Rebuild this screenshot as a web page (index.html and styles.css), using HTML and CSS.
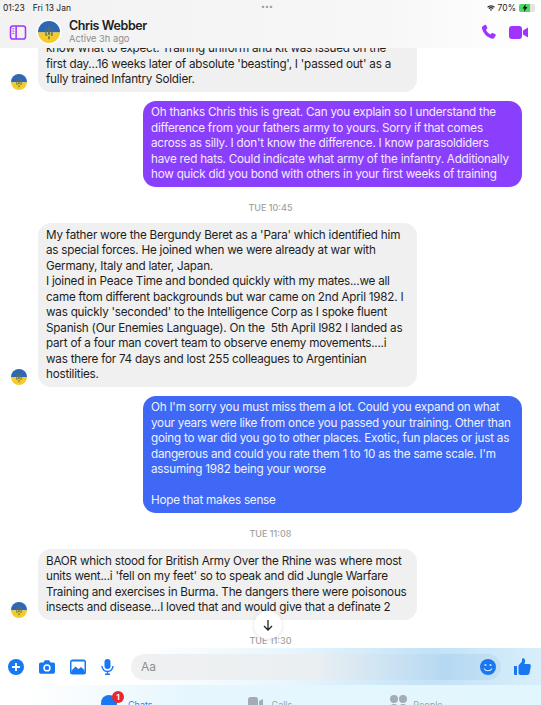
FILE: index.html
```html
<!DOCTYPE html>
<html lang="en">
<head>
  <meta charset="UTF-8" />
  <title>Chris Webber</title>
  <link rel="stylesheet" href="styles.css">
</head>
<body>
  <svg class="defs" width="0" height="0">
    <symbol id="flag" viewBox="0 0 24 24">
      <rect width="24" height="12.5" fill="#2c68b5" />
      <rect y="12.5" width="24" height="11.5" fill="#f5cb2a" />
      <path d="M12 5l.9 2v6l.6 2h-3l.6-2V7z M8 7.500l1.400.8v5.200l.8 2.500H8z M16 7.500l-1.400.8v5.200l-.8 2.500H16z M11.200 16.500h1.600V20h-1.600z" fill="#66704f" />
    </symbol>
  </svg>

  <div class="screen">
    <header class="top">
      <div class="status">
        <span class="clock">01:23</span>
        <span class="date">Fri 13 Jan</span>
        <span class="dots">•••</span>
        <span class="sys">
          <svg class="wifi" viewBox="0 0 12 9"><path d="M6 9L4.300 7a2.500 2.500 0 0 1 3.400 0z M3.500 6L2.300 4.800a5.300 5.300 0 0 1 7.400 0L8.500 6a3.600 3.600 0 0 0-5 0z M1.500 4L.3 2.800a8 8 0 0 1 11.400 0L10.500 4a6.300 6.300 0 0 0-9 0z" fill="#222" /></svg>
          70%
          <span class="battery"><span class="battery-fill"><svg class="bolt" viewBox="0 0 6 8"><path d="M3.500 0L.5 4.500h2L2 8l3.500-5h-2z" fill="#111" /></svg></span></span>
        </span>
      </div>
      <div class="contact">
        <svg class="sidebar-icon" viewBox="0 0 18 16"><rect x="1" y="1" width="16" height="14" rx="2.500" fill="none" stroke="#a033ff" stroke-width="1.600" /><path d="M7 1v14" stroke="#a033ff" stroke-width="1.600" /><path d="M3 4h2M3 6.500h2M3 9h2" stroke="#a033ff" stroke-width="1" /></svg>
        <svg class="avatar-big"><use href="#flag" /></svg>
        <div class="who">
          <div class="name">Chris Webber</div>
          <div class="active">Active 3h ago</div>
        </div>
        <div class="actions">
          <svg class="call" viewBox="0 0 16 16"><path d="M1.500 2.500L4 .8c.5-.3 1-.1 1.200.4l1.100 2.500c.2.400.1.800-.2 1.100L5 5.800c.7 2 2.400 3.800 4.500 4.700l1.100-1.200c.3-.3.800-.4 1.200-.2l2.500 1.200c.5.200.6.800.4 1.200l-1.600 2.600c-.3.500-.8.700-1.300.6C6 14 1.500 8.500.9 3.800c-.1-.5.200-1 .6-1.300z" fill="#a033ff" /></svg>
          <svg class="video" viewBox="0 0 19 13"><rect width="13" height="13" rx="3" fill="#a033ff" /><path d="M14 4.500l5-3v10l-5-3z" fill="#a033ff" /></svg>
        </div>
      </div>
    </header>

    <main class="thread">
      <div class="row in">
        <svg class="avatar"><use href="#flag" /></svg>
        <p class="bubble grey">know what to expect. Training uniform and kit was issued on the first day...16 weeks later of absolute 'beasting', I 'passed out' as a fully trained Infantry Soldier.</p>
      </div>
      <div class="row out">
        <p class="bubble purple">Oh thanks Chris this is great. Can you explain so I understand the difference from your fathers army to yours. Sorry if that comes across as silly. I don't know the difference. I know parasoldiders have red hats. Could indicate what army of the infantry. Additionally how quick did you bond with others in your first weeks of training</p>
      </div>
      <div class="stamp">TUE 10:45</div>
      <div class="row in">
        <svg class="avatar"><use href="#flag" /></svg>
        <p class="bubble grey">My father wore the Bergundy Beret as a 'Para' which identified him as special forces. He joined when we were already at war with Germany, Italy and later, Japan.<br>I joined in Peace Time and bonded quickly with my mates...we all came ftom different backgrounds but war came on 2nd April 1982. I was quickly 'seconded' to the Intelligence Corp as I spoke fluent Spanish (Our Enemies Language). On the &nbsp;5th April l982 I landed as part of a four man covert team to observe enemy movements....i was there for 74 days and lost 255 colleagues to Argentinian hostilities.</p>
      </div>
      <div class="row out">
        <p class="bubble blue">Oh I'm sorry you must miss them a lot. Could you expand on what your years were like from once you passed your training. Other than going to war did you go to other places. Exotic, fun places or just as dangerous and could you rate them 1 to 10 as the same scale. I'm assuming 1982 being your worse<br><br>Hope that makes sense</p>
      </div>
      <div class="stamp">TUE 11:08</div>
      <div class="row in">
        <svg class="avatar"><use href="#flag" /></svg>
        <p class="bubble grey">BAOR which stood for British Army Over the Rhine was where most units went...i 'fell on my feet' so to speak and did Jungle Warfare Training and exercises in Burma. The dangers there were poisonous insects and disease...I loved that and would give that a definate 2</p>
      </div>
      <div class="stamp last">TUE 11:30</div>
      <button class="jump">
        <svg viewBox="0 0 12 12"><path d="M6 1v10M2 7l4 4 4-4" fill="none" stroke="#222" stroke-width="1.300" /></svg>
      </button>
    </main>

    <footer class="bottom">
      <div class="composer">
        <svg class="tool" viewBox="0 0 16 16"><circle cx="8" cy="8" r="8" fill="#1877f2" /><path d="M8 4v8M4 8h8" stroke="#fff" stroke-width="1.800" /></svg>
        <svg class="tool" viewBox="0 0 18 15"><path d="M2 2.500h3L6.500 0h5L13 2.500h3a2 2 0 0 1 2 2V13a2 2 0 0 1-2 2H2a2 2 0 0 1-2-2V4.500a2 2 0 0 1 2-2z" fill="#1877f2" /><circle cx="9" cy="8.500" r="3.300" fill="none" stroke="#fff" stroke-width="1.700" /></svg>
        <svg class="tool" viewBox="0 0 16 15"><rect width="16" height="15" rx="2.500" fill="#1877f2" /><rect x="1.500" y="2" width="13" height="10.500" fill="#fff" /><path d="M1.500 11l4-4 3 2.500 2.500-2 3.500 3v2h-13z" fill="#1877f2" /></svg>
        <svg class="tool mic" viewBox="0 0 13 16"><rect x="3.500" width="6" height="10" rx="3" fill="#1877f2" /><path d="M1 7a5.500 5.500 0 0 0 11 0M6.500 12.500V15M4 15.300h5" fill="none" stroke="#1877f2" stroke-width="1.400" /></svg>
        <div class="field">
          <span class="hint">Aa</span>
          <svg class="smile" viewBox="0 0 16 16"><circle cx="8" cy="8" r="8" fill="#1877f2" /><circle cx="5.500" cy="6" r="1.100" fill="#cfe6f7" /><circle cx="10.500" cy="6" r="1.100" fill="#cfe6f7" /><path d="M4 9.500c1.500 3 6.500 3 8 0" fill="none" stroke="#cfe6f7" stroke-width="1.100" /></svg>
        </div>
        <svg class="thumb" viewBox="0 0 17 17"><path d="M0 8h3v9H1a1 1 0 0 1-1-1z M4.500 7.500L8 3.500V1c0-1 2.500-1.200 3 1 .3 1.500-.2 3-.6 4H15c1.500 0 2 1.200 1.800 2.200L15.500 15c-.3 1.300-1 2-2.500 2H7c-1.200 0-2.500-.6-2.500-1.500z" fill="#1877f2" /></svg>
      </div>
      <nav class="tabs">
        <div class="tab chats">
          <span class="chat-blob"><span class="badge">1</span></span>
          <span class="tab-label">Chats</span>
        </div>
        <div class="tab calls">
          <svg class="tab-video" viewBox="0 0 15 12"><rect width="10" height="12" rx="2.500" fill="#a3adb3" /><path d="M11 4l4-2v8l-4-2z" fill="#a3adb3" /></svg>
          <span class="tab-label">Calls</span>
        </div>
        <div class="tab people">
          <span class="heads"><i></i><i></i></span>
          <span class="tab-label">People</span>
        </div>
      </nav>
    </footer>
  </div>
</body>
</html>
```

FILE: styles.css
```css
* {
  box-sizing: border-box;
}
html, body {
  margin: 0;
  padding: 0;
  height: 100%;
  overflow: hidden;
}
body {
  font-family: Inter, 'Liberation Sans', sans-serif;
  background: #fff;
  color: #222;
}
.defs {
  position: absolute;
}
.screen {
  position: relative;
  width: 541px;
  height: 705px;
  display: flex;
  flex-direction: column;
  overflow: hidden;
}

/* header floats over the thread */
.top {
  position: absolute;
  top: 0;
  left: 0;
  right: 0;
  height: 48px;
  z-index: 2;
  background: linear-gradient(to right, #f2f2f2, #f7f7f7 70%, #fff);
}
.status {
  height: 14px;
  padding: 1px 6px 0 3px;
  display: flex;
  align-items: center;
  font-size: 8.500px;
  line-height: 10px;
  position: relative;
}
.date {
  margin-left: 8px;
}
.dots {
  position: absolute;
  left: 261px;
  top: 2px;
  font-size: 7px;
  color: #999;
}
.sys {
  margin-left: auto;
  display: flex;
  align-items: center;
  gap: 3px;
}
.wifi {
  width: 8px;
  height: 6px;
}
.battery {
  display: block;
  width: 16px;
  height: 8px;
  border-radius: 2px;
  background: #e4e4e4;
}
.battery-fill {
  display: block;
  width: 11px;
  height: 8px;
  padding-left: 3px;
  border-radius: 2px 0 0 2px;
  background: #4cd964;
}
.bolt {
  display: block;
  width: 6px;
  height: 8px;
}
.contact {
  display: flex;
  align-items: center;
  height: 36px;
  padding-left: 9px;
}
.sidebar-icon {
  width: 18px;
  height: 15px;
}
.avatar-big {
  width: 22px;
  height: 22px;
  border-radius: 50%;
  margin-left: 11px;
  box-shadow: 0 0 0 1.500px #fff;
}
.who {
  margin-left: 9px;
}
.name {
  font-size: 12.500px;
  font-weight: 600;
  letter-spacing: -0.4px;
  line-height: 14px;
}
.active {
  font-size: 9.300px;
  line-height: 12px;
  color: #8e8e8e;
}
.actions {
  margin-left: auto;
  padding-right: 13px;
  display: flex;
  align-items: center;
  gap: 12px;
}
.call {
  width: 16px;
  height: 16px;
}
.video {
  width: 19px;
  height: 13px;
}

/* messages */
.thread {
  position: relative;
  flex: 1;
  min-height: 0;
  display: flex;
  flex-direction: column;
  justify-content: flex-end;
  overflow: hidden;
}
.row {
  display: flex;
  align-items: flex-end;
  flex: none;
  margin-bottom: 8.500px;
}
.row.in {
  padding-left: 11px;
}
.row.out {
  justify-content: flex-end;
  padding-right: 19px;
  margin-bottom: 9px;
}
.avatar {
  width: 16px;
  height: 16px;
  border-radius: 50%;
  margin-right: 11px;
  margin-bottom: 2px;
}
.bubble {
  margin: 0;
  width: 379px;
  padding: 4.500px 8px;
  border-radius: 13px;
  font-size: 11.700px;
  letter-spacing: -0.23px;
  line-height: 15.500px;
}
.grey {
  background: #f0f0f0;
  color: #1e1e1e;
}
.purple {
  background: #8a3ffc;
  color: #f3eaff;
}
.blue {
  background: #3e68f5;
  color: #eef2ff;
}
.stamp {
  flex: none;
  text-align: center;
  font-size: 9px;
  font-weight: 500;
  line-height: 11px;
  color: #a2a2a2;
  margin: 5.500px 0 10.500px;
}
.stamp.last {
  margin: 6px 0 2.500px;
}
.jump {
  position: absolute;
  left: 254px;
  bottom: 9px;
  width: 28px;
  height: 28px;
  padding: 8px;
  border: none;
  border-radius: 50%;
  background: #fff;
  box-shadow: 0 1px 4px rgba(0, 0, 0, 0.12);
}
.jump svg {
  display: block;
}

/* composer + tab bar */
.bottom {
  flex: none;
  height: 57px;
  background: linear-gradient(to right, #fff 5%, #e6f6fe 35%, #e2f6fe);
}
.composer {
  height: 37px;
  display: flex;
  align-items: center;
  padding: 0 10px 0 8px;
  background: linear-gradient(to right, #fff 25%, #e6f5fd 55%, #c2e2f7 80%, #d8eefb);
}
.tool {
  flex: none;
  width: 16px;
  height: 16px;
  margin-right: 15px;
}
.tool.mic {
  width: 13px;
  margin-right: 17px;
}
.field {
  flex: 1;
  height: 26px;
  margin-right: 13px;
  display: flex;
  align-items: center;
  justify-content: space-between;
  padding: 0 5px 0 10px;
  border-radius: 13px;
  background: linear-gradient(to right, #f0f1f1, #eaeff2 50%, #b5d9f2 85%, #c5e0f3);
}
.hint {
  font-size: 12px;
  color: #8b8f92;
}
.smile {
  width: 16px;
  height: 16px;
}
.thumb {
  flex: none;
  width: 17px;
  height: 17px;
}
.tabs {
  display: flex;
  height: 20px;
  font-size: 9px;
  color: #9aa4aa;
  padding-top: 5px;
}
.tab {
  display: flex;
  align-items: flex-start;
}
.tab-label {
  padding-top: 9px;
  line-height: 11px;
}
.chats {
  margin-left: 101px;
  color: #2f7fee;
  gap: 11px;
}
.calls {
  margin-left: 95px;
  gap: 9px;
}
.people {
  margin-left: 98px;
  gap: 6px;
}
.chat-blob {
  position: relative;
  display: block;
  width: 16px;
  height: 16px;
  margin-top: 5px;
  border-radius: 50%;
  background: #1877f2;
}
.badge {
  position: absolute;
  left: 11px;
  top: -4px;
  width: 12px;
  height: 12px;
  border-radius: 50%;
  background: #e8282e;
  color: #fff;
  font-size: 8px;
  font-weight: 700;
  line-height: 12px;
  text-align: center;
}
.tab-video {
  width: 15px;
  height: 12px;
  margin-top: 7px;
}
.heads {
  display: flex;
  gap: 1px;
  margin-top: 5px;
}
.heads i {
  display: block;
  width: 8px;
  height: 8px;
  border-radius: 50%;
  background: #a3adb3;
  box-shadow: 0 9px 0 #a3adb3;
}
```
